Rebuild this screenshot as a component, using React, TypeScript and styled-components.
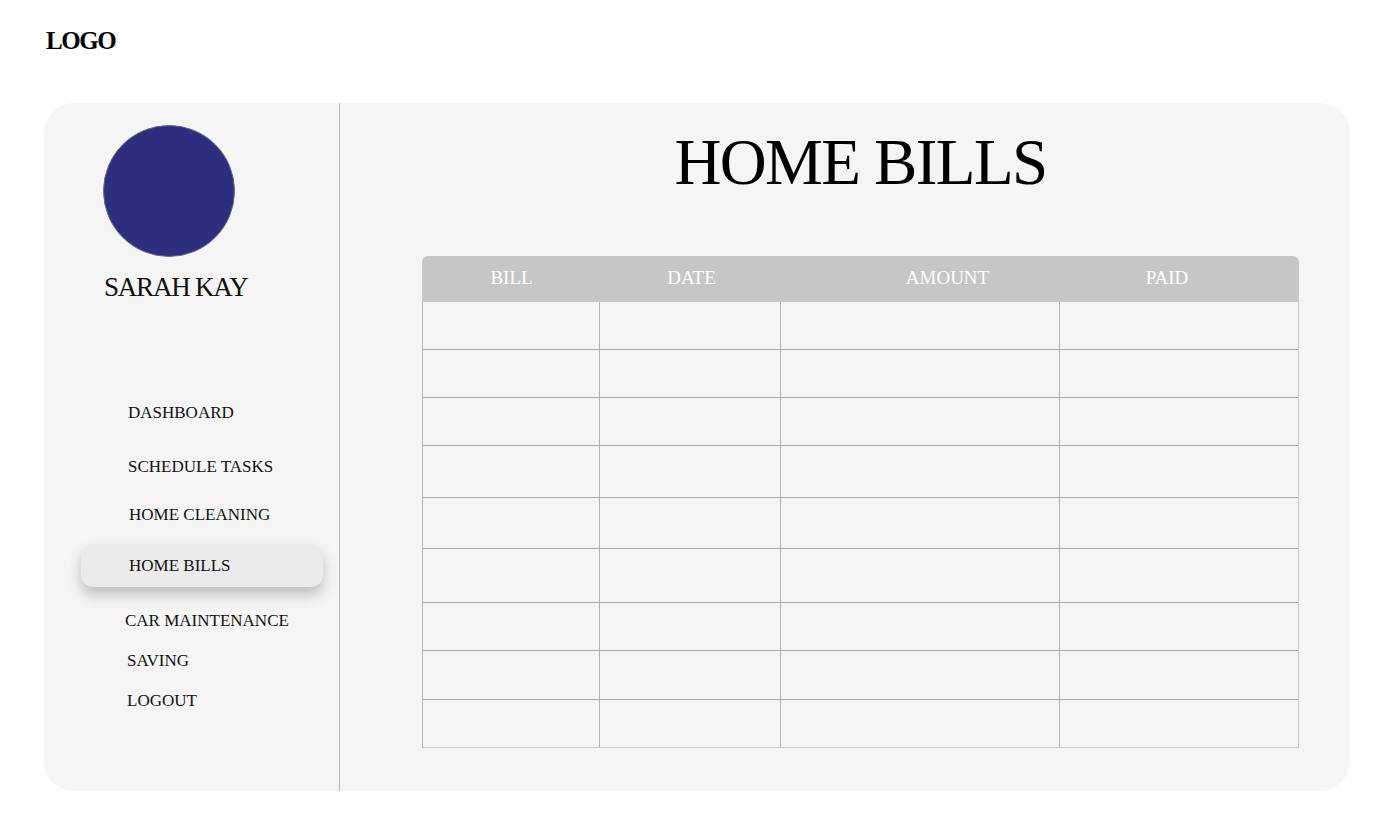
import React from "react";
import styled, { createGlobalStyle } from "styled-components";

const Global = createGlobalStyle`
  html, body { margin: 0; padding: 0; background: #ffffff; }
  body { font-family: "Liberation Serif", "Times New Roman", serif; color: #111; }
  * { box-sizing: border-box; }
`;

const Page = styled.div`
  width: 1396px;
  height: 834px;
  padding: 0 46px 0 44px;
  display: flex;
  flex-direction: column;
`;

const TopBar = styled.header`
  height: 103px;
  padding: 28px 0 0 2px;
`;

const Logo = styled.div`
  font-family: "Liberation Serif", serif;
  font-weight: 700;
  font-size: 25px;
  line-height: 26px;
  letter-spacing: -1.4px;
  color: #000;
`;

const Card = styled.div`
  height: 688px;
  background: #f5f5f5;
  border-radius: 30px;
  display: flex;
  overflow: hidden;
`;

const Sidebar = styled.aside`
  width: 296px;
  flex: none;
  border-right: 1px solid #b5b5b5;
  padding-top: 22px;
  display: flex;
  flex-direction: column;
`;

const Avatar = styled.div`
  width: 132px;
  height: 132px;
  margin-left: 59px;
  border-radius: 50%;
  background: #2c2e80;
  border: 1px solid #6a6a7c;
`;

const Name = styled.div`
  margin: 17px 0 0 60px;
  font-size: 27px;
  line-height: 27px;
  letter-spacing: -1.2px;
  color: #111;
`;

const Nav = styled.nav`
  margin-top: 92px;
  display: flex;
  flex-direction: column;
`;

const NavItem = styled.div<{ $active?: boolean; $mt: number; $indent: number }>`
  margin-top: ${(p) => p.$mt}px;
  margin-left: 37px;
  width: 242px;
  height: ${(p) => (p.$active ? 43 : 40)}px;
  display: flex;
  align-items: center;
  padding-left: ${(p) => p.$indent}px;
  font-size: 17px;
  line-height: 20px;
  color: #111;
  border-radius: 12px;
  background: ${(p) => (p.$active ? "#ebebeb" : "transparent")};
  box-shadow: ${(p) => (p.$active ? "0 8px 14px rgba(0,0,0,0.22)" : "none")};
`;

const Main = styled.main`
  flex: 1;
  padding: 26px 51px 0 82px;
  display: flex;
  flex-direction: column;
`;

const Title = styled.h1`
  margin: 0;
  font-weight: 400;
  font-size: 65px;
  line-height: 66px;
  letter-spacing: -1.6px;
  text-align: center;
  color: #000;
`;

const Table = styled.div`
  margin-top: 61px;
  display: flex;
  flex-direction: column;
`;

const cols = "177px 181px 279px 1fr";

const HeadRow = styled.div`
  height: 46px;
  background: #c6c6c6;
  border-radius: 6px 6px 0 0;
  display: grid;
  grid-template-columns: ${cols};
`;

const HeadCell = styled.div<{ $shift: number }>`
  display: flex;
  align-items: center;
  justify-content: center;
  padding-bottom: 2px;
  color: #ffffff;
  font-size: 19px;
  transform: translateX(${(p) => p.$shift}px);
`;

const Body = styled.div`
  border-left: 1px solid #b3b3b3;
  border-right: 1.5px solid #c9c9c9;
  border-bottom: 1.5px solid #c9c9c9;
`;

const Row = styled.div<{ $h: number; $last?: boolean }>`
  height: ${(p) => p.$h}px;
  display: grid;
  grid-template-columns: ${cols};
  border-bottom: ${(p) => (p.$last ? "none" : "1px solid #ababab")};
`;

const Cell = styled.div`
  border-right: 1px solid #b3b3b3;
  &:last-child { border-right: none; }
`;

const navItems = [
  { label: "DASHBOARD", mt: 0, indent: 47 },
  { label: "SCHEDULE TASKS", mt: 14, indent: 47 },
  { label: "HOME CLEANING", mt: 8, indent: 48 },
  { label: "HOME BILLS", mt: 9, indent: 48, active: true },
  { label: "CAR MAINTENANCE", mt: 14, indent: 44 },
  { label: "SAVING", mt: 0, indent: 46 },
  { label: "LOGOUT", mt: 0, indent: 46 },
];

const headers = [
  { label: "BILL", shift: 1 },
  { label: "DATE", shift: 2 },
  { label: "AMOUNT", shift: 28 },
  { label: "PAID", shift: -12 },
];

const rowHeights = [48, 48, 48, 52, 51, 54, 48, 49, 47];

export default function App() {
  return (
    <>
      <Global />
      <Page>
        <TopBar>
          <Logo>LOGO</Logo>
        </TopBar>
        <Card>
          <Sidebar>
            <Avatar />
            <Name>SARAH KAY</Name>
            <Nav>
              {navItems.map((n) => (
                <NavItem key={n.label} $mt={n.mt} $indent={n.indent} $active={n.active}>
                  {n.label}
                </NavItem>
              ))}
            </Nav>
          </Sidebar>
          <Main>
            <Title>HOME BILLS</Title>
            <Table>
              <HeadRow>
                {headers.map((h) => (
                  <HeadCell key={h.label} $shift={h.shift}>
                    {h.label}
                  </HeadCell>
                ))}
              </HeadRow>
              <Body>
                {rowHeights.map((h, i) => (
                  <Row key={i} $h={h} $last={i === rowHeights.length - 1}>
                    <Cell />
                    <Cell />
                    <Cell />
                    <Cell />
                  </Row>
                ))}
              </Body>
            </Table>
          </Main>
        </Card>
      </Page>
    </>
  );
}
